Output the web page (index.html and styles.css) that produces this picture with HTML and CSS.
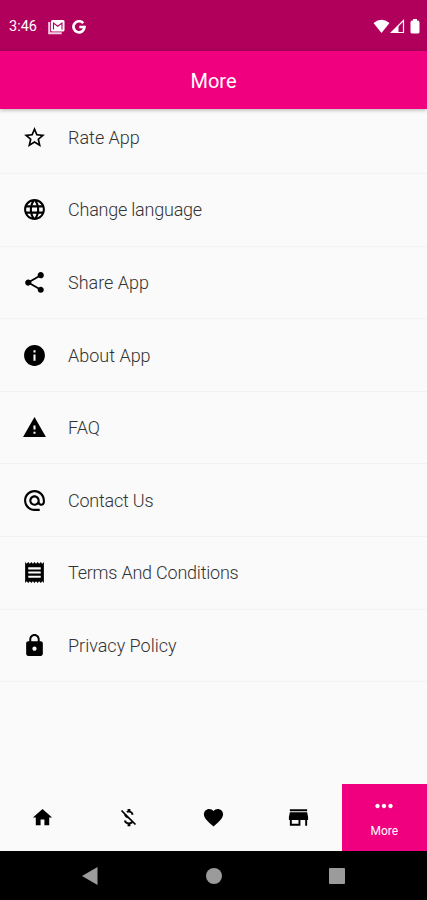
FILE: index.html
```html
<!DOCTYPE html>
<html lang="en">
  <head>
    <meta charset="UTF-8" />
    <title>More</title>
    <meta name="viewport" content="width=device-width, initial-scale=1.0" />
    <link rel="stylesheet" href="styles.css">
  </head>
  <body>
    <div class="status-bar">
      <span class="time">3:46</span>
      <svg class="mail" width="17" height="16" viewBox="0 0 17 16">
        <path d="M1.200 3v11.300h12.500" fill="none" stroke="#f3cfe2" stroke-width="2" />
        <rect x="3" y="1" width="13.500" height="11.500" rx="1.500" fill="#fff" />
        <path d="M5.500 10.500V4l4.200 3.200L14 4v6.500" fill="none" stroke="#b0005c" stroke-width="1.100" />
      </svg>
      <svg class="google" width="14" height="14" viewBox="0 0 14 14">
        <path d="M11.200 3.200A5.500 5.500 0 1 0 12.500 7H7.300" fill="none" stroke="#fff" stroke-width="2.700" />
      </svg>
      <div class="signals">
        <svg width="17" height="15" viewBox="0 0 17 15">
          <path d="M.5 4Q8.500-2.700 16.500 4L8.500 14z" fill="#fff" />
        </svg>
        <svg width="15" height="15" viewBox="0 0 15 15">
          <path d="M1.500 13.500H13.500V1.500z" fill="none" stroke="#fff" stroke-width="1.200" />
          <path d="M.5 14L8.500 6v8z" fill="#fff" />
        </svg>
        <svg class="battery" width="10" height="15" viewBox="0 0 10 15">
          <path d="M3 0h4v1.500h1.500L9.500 3v10.500l-1 1h-7l-1-1V3l1-1.500H3z" fill="#fff" />
        </svg>
      </div>
    </div>
    <header class="header">
      <h1>More</h1>
    </header>
    <main class="content">
      <ul class="menu">
        <li>
          <svg viewBox="0 0 24 24"><path d="M22 9.240l-7.190-.620L12 2 9.190 8.630 2 9.240l5.460 4.730L5.820 21 12 17.270 18.180 21l-1.630-7.030L22 9.240zM12 15.400l-3.760 2.270 1-4.280-3.320-2.880 4.380-.380L12 6.100l1.710 4.040 4.380.380-3.320 2.880 1 4.280L12 15.400z" /></svg>
          <span>Rate App</span>
        </li>
        <li>
          <svg viewBox="0 0 24 24"><path d="M11.990 2C6.470 2 2 6.480 2 12s4.470 10 9.990 10C17.520 22 22 17.520 22 12S17.520 2 11.990 2zm6.930 6h-2.950c-.320-1.250-.780-2.450-1.380-3.560 1.840.630 3.370 1.910 4.330 3.560zM12 4.040c.830 1.200 1.480 2.530 1.910 3.960h-3.820c.430-1.430 1.080-2.760 1.910-3.960zM4.260 14C4.100 13.360 4 12.690 4 12s.100-1.360.260-2h3.380c-.080.660-.140 1.320-.140 2s.060 1.340.140 2H4.260zm.820 2h2.950c.320 1.250.780 2.450 1.380 3.560-1.840-.630-3.370-1.900-4.330-3.560zm2.950-8H5.080c.960-1.660 2.490-2.930 4.330-3.560C8.810 5.550 8.350 6.750 8.030 8zM12 19.960c-.830-1.200-1.480-2.530-1.910-3.960h3.820c-.430 1.430-1.080 2.760-1.910 3.960zM14.340 14H9.660c-.090-.660-.160-1.320-.160-2s.070-1.350.160-2h4.680c.090.650.160 1.320.160 2s-.070 1.340-.160 2zm.250 5.560c.600-1.110 1.060-2.310 1.380-3.560h2.950c-.960 1.650-2.490 2.930-4.330 3.560zM16.360 14c.080-.660.140-1.320.140-2s-.060-1.340-.140-2h3.380c.160.640.260 1.310.260 2s-.100 1.360-.260 2h-3.380z" /></svg>
          <span class="tight">Change language</span>
        </li>
        <li>
          <svg viewBox="0 0 24 24"><path d="M18 16.080c-.760 0-1.440.300-1.960.770L8.910 12.700c.050-.230.090-.460.090-.700s-.040-.470-.090-.700l7.050-4.110c.540.500 1.250.810 2.040.810 1.660 0 3-1.340 3-3s-1.340-3-3-3-3 1.340-3 3c0 .240.040.470.090.700L8.040 9.810C7.500 9.310 6.790 9 6 9c-1.660 0-3 1.340-3 3s1.340 3 3 3c.790 0 1.500-.310 2.040-.810l7.120 4.160c-.050.210-.080.430-.080.650 0 1.610 1.310 2.920 2.920 2.920s2.920-1.310 2.920-2.920-1.310-2.920-2.920-2.920z" /></svg>
          <span>Share App</span>
        </li>
        <li>
          <svg viewBox="0 0 24 24"><path d="M12 2C6.480 2 2 6.480 2 12s4.480 10 10 10 10-4.480 10-10S17.520 2 12 2zm1 15h-2v-6h2v6zm0-8h-2V7h2v2z" /></svg>
          <span>About App</span>
        </li>
        <li>
          <svg viewBox="0 0 24 24"><path d="M1 21h22L12 2 1 21zm12-3h-2v-2h2v2zm0-4h-2v-4h2v4z" /></svg>
          <span>FAQ</span>
        </li>
        <li>
          <svg viewBox="0 0 24 24"><path d="M12 2C6.480 2 2 6.480 2 12s4.480 10 10 10h5v-2h-5c-4.340 0-8-3.660-8-8s3.660-8 8-8 8 3.660 8 8v1.430c0 .790-.710 1.570-1.500 1.570s-1.500-.780-1.500-1.570V12c0-2.760-2.240-5-5-5s-5 2.240-5 5 2.240 5 5 5c1.380 0 2.640-.560 3.540-1.470.650.890 1.770 1.470 2.960 1.470 1.970 0 3.500-1.600 3.500-3.570V12c0-5.520-4.480-10-10-10zm0 13c-1.660 0-3-1.340-3-3s1.340-3 3-3 3 1.340 3 3-1.340 3-3 3z" /></svg>
          <span class="tight">Contact Us</span>
        </li>
        <li>
          <svg viewBox="0 0 24 24"><path d="M18 17H6v-2h12v2zm0-4H6v-2h12v2zm0-4H6V7h12v2zM3 22l1.500-1.500L6 22l1.500-1.500L9 22l1.500-1.500L12 22l1.500-1.500L15 22l1.500-1.500L18 22l1.500-1.500L21 22V2l-1.500 1.500L18 2l-1.500 1.500L15 2l-1.500 1.500L12 2l-1.500 1.500L9 2 7.500 3.500 6 2 4.500 3.500 3 2v20z" /></svg>
          <span class="tight">Terms And Conditions</span>
        </li>
        <li>
          <svg viewBox="0 0 24 24"><path d="M18 8h-1V6c0-2.760-2.240-5-5-5S7 3.240 7 6v2H6c-1.100 0-2 .900-2 2v10c0 1.100.900 2 2 2h12c1.100 0 2-.900 2-2V10c0-1.100-.900-2-2-2zm-6 9c-1.100 0-2-.900-2-2s.900-2 2-2 2 .900 2 2-.900 2-2 2zm3.100-9H8.900V6c0-1.710 1.390-3.100 3.100-3.100s3.100 1.390 3.100 3.100v2z" /></svg>
          <span>Privacy Policy</span>
        </li>
      </ul>
    </main>
    <nav class="tabs">
      <a class="tab"><svg viewBox="0 0 24 24"><path d="M10 20v-6h4v6h5v-8h3L12 3 2 12h3v8z" /></svg></a>
      <a class="tab"><svg viewBox="0 0 24 24"><path d="M12.500 6.900c1.780 0 2.440.850 2.500 2.100h2.210c-.070-1.720-1.120-3.300-3.210-3.810V3h-3v2.160c-.530.120-1.030.300-1.480.540l1.470 1.470c.410-.170.910-.270 1.510-.270zM5.330 4.060L4.060 5.330 7.500 8.770c0 2.080 1.560 3.210 3.910 3.910l3.510 3.510c-.340.480-1.050.910-2.420.910-2.060 0-2.870-.920-2.980-2.100h-2.200c.120 2.190 1.760 3.420 3.680 3.830V21h3v-2.150c.960-.180 1.820-.550 2.450-1.120l2.220 2.220 1.270-1.270L5.330 4.060z" /></svg></a>
      <a class="tab"><svg viewBox="0 0 24 24"><path d="M12 21.350l-1.450-1.320C5.400 15.360 2 12.280 2 8.500 2 5.420 4.420 3 7.500 3c1.740 0 3.410.810 4.500 2.090C13.090 3.810 14.760 3 16.500 3 19.580 3 22 5.420 22 8.500c0 3.780-3.400 6.860-8.550 11.540L12 21.350z" /></svg></a>
      <a class="tab"><svg viewBox="0 0 24 24"><path d="M3 3.500h18v2H3zM3 6.500h18l1 5v3h-1v6h-2v-6h-5v6H3v-6H2v-3zM5 14.500v4h7v-4z" fill-rule="evenodd" /></svg></a>
      <a class="tab active">
        <svg viewBox="0 0 24 24"><path d="M6 10c-1.100 0-2 .900-2 2s.900 2 2 2 2-.900 2-2-.900-2-2-2zm12 0c-1.100 0-2 .900-2 2s.900 2 2 2 2-.900 2-2-.900-2-2-2zm-6 0c-1.100 0-2 .900-2 2s.900 2 2 2 2-.900 2-2-.900-2-2-2z" /></svg>
        <span>More</span>
      </a>
    </nav>
    <div class="system-nav">
      <svg width="16" height="18" viewBox="0 0 16 18"><path d="M0 9L15.500 0v18z" /></svg>
      <svg width="16" height="16" viewBox="0 0 16 16"><circle cx="8" cy="8" r="8" /></svg>
      <svg width="16" height="16" viewBox="0 0 16 16"><rect width="16" height="16" rx="1" /></svg>
    </div>
  </body>
</html>
```

FILE: styles.css
```css
* {
  box-sizing: border-box;
}

body {
  display: flex;
  flex-direction: column;
  height: 900px;
  margin: 0;
  overflow: hidden;
  background: #fafafa;
  font-family: Roboto, "Open Sans", sans-serif;
}

svg {
  display: block;
  flex-shrink: 0;
}

.status-bar {
  display: flex;
  align-items: center;
  height: 51px;
  padding: 2px 7px 0 9px;
  background: #b0005c;
  color: #fff;
}

.time {
  width: 39px;
  font-size: 14.5px;
}

.google {
  margin-left: 7px;
}

.signals {
  display: flex;
  margin-left: auto;
}

.battery {
  margin-left: 5px;
}

.header {
  position: relative;
  display: flex;
  align-items: center;
  justify-content: center;
  height: 58px;
  padding-top: 2px;
  background: #f0007f;
  color: #fff;
  box-shadow: 0 1px 4px rgba(0, 0, 0, 0.3);
}

.header h1 {
  margin: 0;
  font-size: 20px;
  font-weight: 400;
}

.content {
  flex: 1;
}

.menu {
  margin: -7.5px 0 0;
  padding: 0;
  list-style: none;
}

.menu li {
  display: flex;
  align-items: center;
  height: 72.6px;
  padding-left: 21.5px;
  border-bottom: 1px solid #f2f2f2;
  color: #333;
  font-size: 18px;
  font-weight: 300;
}

.menu svg {
  width: 25px;
  height: 25px;
  margin-right: 21.5px;
  fill: #000;
}

.menu .tight {
  letter-spacing: -0.22px;
}

.tabs {
  display: flex;
  height: 67px;
}

.tab {
  display: flex;
  flex: 1;
  flex-direction: column;
  align-items: center;
  justify-content: center;
}

.tab svg {
  width: 23px;
  height: 23px;
}

.tab.active {
  justify-content: flex-start;
  padding-top: 9px;
  background: #f0007f;
  color: #fff;
  font-size: 12px;
}

.tab.active svg {
  width: 26px;
  height: 26px;
  fill: #fff;
}

.tab.active span {
  margin-top: 5px;
  line-height: 14px;
}

.system-nav {
  display: flex;
  align-items: center;
  justify-content: space-between;
  height: 49px;
  padding: 0 82px;
  background: #000;
}

.system-nav svg {
  fill: #9b9b9b;
}
```
